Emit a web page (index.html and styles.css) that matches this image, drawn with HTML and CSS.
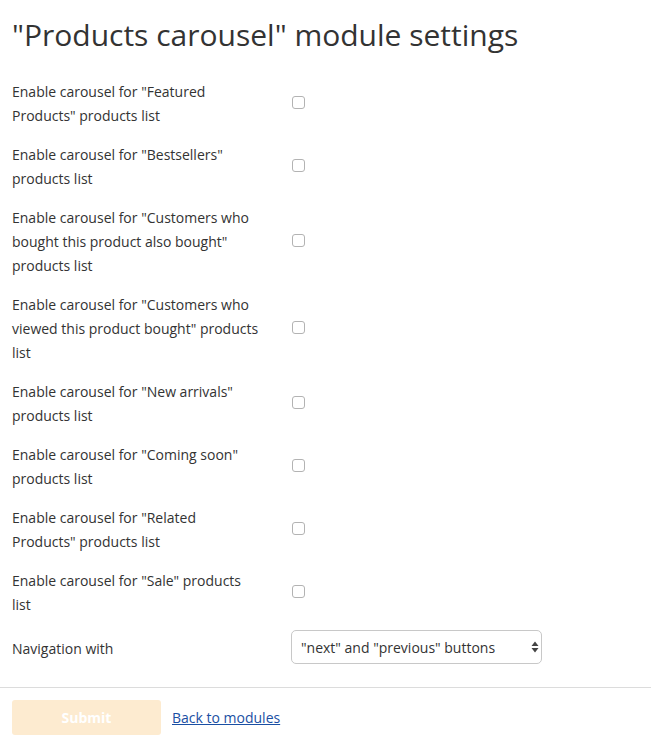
FILE: index.html
```html
<!DOCTYPE html>
<html>
<head>
<meta charset="utf-8">
<link rel="stylesheet" href="styles.css">
</head>
<body>
<div class="content">
  <h1 class="title">"Products carousel" module settings</h1>
  <form class="settings">
    <div class="row"><label class="label">Enable carousel for "Featured Products" products list</label><input type="checkbox" class="check"></div>
    <div class="row"><label class="label">Enable carousel for "Bestsellers" products list</label><input type="checkbox" class="check"></div>
    <div class="row"><label class="label">Enable carousel for "Customers who bought this product also bought" products list</label><input type="checkbox" class="check"></div>
    <div class="row"><label class="label">Enable carousel for "Customers who viewed this product bought" products list</label><input type="checkbox" class="check"></div>
    <div class="row"><label class="label">Enable carousel for "New arrivals" products list</label><input type="checkbox" class="check"></div>
    <div class="row"><label class="label">Enable carousel for "Coming soon" products list</label><input type="checkbox" class="check"></div>
    <div class="row"><label class="label">Enable carousel for "Related Products" products list</label><input type="checkbox" class="check"></div>
    <div class="row"><label class="label">Enable carousel for "Sale" products list</label><input type="checkbox" class="check"></div>
    <div class="row nav-row"><label class="label nav-label">Navigation with</label>
      <div class="select-wrap">
        <select class="select"><option>"next" and "previous" buttons</option></select>
        <svg class="select-arrows" width="8" height="12" viewBox="0 0 8 12"><path d="M4 0.5 L7.5 5 L0.5 5 Z M4 11.5 L7.5 7 L0.5 7 Z" fill="#444"/></svg>
      </div>
    </div>
  </form>
</div>
<div class="footer">
  <button class="submit" type="button">Submit</button>
  <a class="back" href="#">Back to modules</a>
</div>
</body>
</html>
```
FILE: styles.css
```css
html, body {
  margin: 0;
  padding: 0;
  background: #fff;
}
body {
  font-family: "Open Sans", "Noto Sans", sans-serif;
  font-size: 14px;
  line-height: 24px;
  color: #333;
}
.content {
  padding: 0 12px;
}
.title {
  font-size: 30px;
  font-weight: 400;
  line-height: 40px;
  margin: 15px 0 25px;
  color: #333;
}
.settings {
  display: flex;
  flex-direction: column;
  gap: 15px;
}
.row {
  display: flex;
  align-items: center;
}
.label {
  width: 248px;
  flex: none;
}
.nav-label {
  padding-top: 4px;
}
.check {
  appearance: none;
  -webkit-appearance: none;
  width: 13px;
  height: 13px;
  margin: 0 0 3px 32px;
  border: 1px solid #b3b3b3;
  border-radius: 3px;
  background: #fff;
  box-sizing: border-box;
}
.nav-row {
  margin-top: -2px;
}
.select-wrap {
  position: relative;
  margin-left: 31px;
  width: 251px;
  height: 34px;
}
.select {
  appearance: none;
  -webkit-appearance: none;
  width: 100%;
  height: 100%;
  box-sizing: border-box;
  border: 1px solid #c8c8c8;
  border-radius: 5px;
  background: #fff;
  font-family: "Open Sans", "Noto Sans", sans-serif;
  font-size: 14px;
  color: #333;
  padding: 0 24px 0 9px;
  margin: 0;
}
.select-arrows {
  position: absolute;
  right: 3px;
  top: 11px;
}
.footer {
  margin-top: 23px;
  border-top: 1px solid #dcdcdc;
  padding: 12px 12px 0;
  display: flex;
  align-items: center;
  gap: 11px;
}
.submit {
  width: 149px;
  height: 35px;
  border: none;
  border-radius: 3px;
  background: #fdebd0;
  color: #fff;
  font-family: "Open Sans", "Noto Sans", sans-serif;
  font-size: 14px;
  font-weight: 700;
  padding: 0;
}
.back {
  color: #1a4fa3;
  text-decoration: underline;
  font-size: 14px;
}
```
